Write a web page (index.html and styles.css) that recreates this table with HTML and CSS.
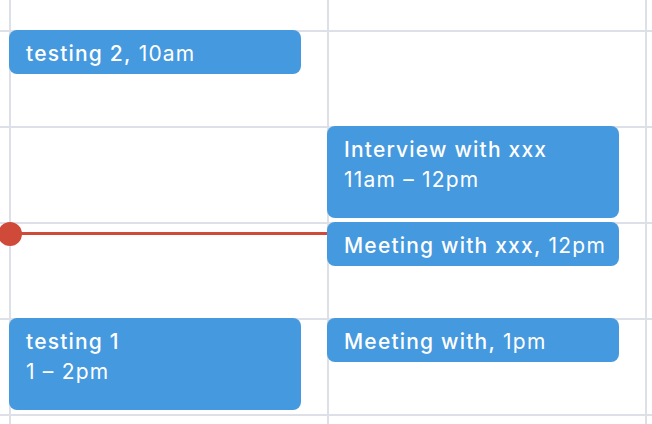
FILE: index.html
```html
<!DOCTYPE html>
<html>
<head>
<meta charset="utf-8">
<link rel="stylesheet" href="styles.css">
</head>
<body>
<div class="cal">
  <div class="cell c1 r1"></div><div class="cell c2 r1"></div><div class="cell c3 r1"></div><div class="cell c4 r1"></div>
  <div class="cell c1 r2"></div><div class="cell c2 r2"></div><div class="cell c3 r2"></div><div class="cell c4 r2"></div>
  <div class="cell c1 r3"></div><div class="cell c2 r3"></div><div class="cell c3 r3"></div><div class="cell c4 r3"></div>
  <div class="cell c1 r4"></div><div class="cell c2 r4"></div><div class="cell c3 r4"></div><div class="cell c4 r4"></div>
  <div class="cell c1 r5"></div><div class="cell c2 r5"></div><div class="cell c3 r5"></div><div class="cell c4 r5"></div>
  <div class="cell c1 r6"></div><div class="cell c2 r6"></div><div class="cell c3 r6"></div><div class="cell c4 r6"></div>

  <div class="event short ev-t2"><b>testing 2,</b> 10am</div>
  <div class="event tall ev-int"><b>Interview with xxx</b><br>11am – 12pm</div>
  <div class="now"></div>
  <div class="event short ev-meet"><b>Meeting with xxx,</b> 12pm</div>
  <div class="event tall ev-t1"><b>testing 1</b><br>1 – 2pm</div>
  <div class="event short ev-m1"><b>Meeting with,</b> 1pm</div>
</div>
</body>
</html>
```
FILE: styles.css
```css
html, body {
  margin: 0;
  padding: 0;
  background: #ffffff;
}
.cal {
  display: grid;
  grid-template-columns: 9px 318px 318px 7px;
  grid-template-rows: 30px 96px 96px 96px 96px 10px;
  width: 652px;
  height: 424px;
  overflow: hidden;
  font-family: Inter, Roboto, "Noto Sans", sans-serif;
}
.cell { box-sizing: border-box; }
.c2, .c3, .c4 { border-left: 2px solid #dde1e7; }
.r2, .r3, .r4, .r5, .r6 { border-top: 2px solid #dde1e7; }
.c1 { grid-column: 1; } .c2 { grid-column: 2; } .c3 { grid-column: 3; } .c4 { grid-column: 4; }
.r1 { grid-row: 1; } .r2 { grid-row: 2; } .r3 { grid-row: 3; } .r4 { grid-row: 4; } .r5 { grid-row: 5; } .r6 { grid-row: 6; }

.event {
  box-sizing: border-box;
  align-self: start;
  width: 292px;
  background: #4599df;
  color: #ffffff;
  border-radius: 8px;
  padding: 9px 0 0 17px;
  font-size: 21px;
  font-weight: 400;
  letter-spacing: 1.2px;
  line-height: 30px;
  white-space: nowrap;
  position: relative;
  z-index: 1;
}
.event b { font-weight: 500; }
.short { height: 44px; }
.tall { height: 92px; }
.ev-t2 { grid-column: 2; grid-row: 2; }
.ev-int { grid-column: 3; grid-row: 3; }
.ev-meet { grid-column: 3; grid-row: 4; }
.ev-t1 { grid-column: 2; grid-row: 5; }
.ev-m1 { grid-column: 3; grid-row: 5; }

.now {
  grid-column: 1 / 3;
  grid-row: 4;
  align-self: start;
  margin-top: 10px;
  height: 3px;
  background: #d04a3a;
  position: relative;
  z-index: 2;
}
.now::before {
  content: "";
  position: absolute;
  left: -2px;
  top: -10px;
  width: 24px;
  height: 24px;
  border-radius: 50%;
  background: #d04a3a;
}
```
